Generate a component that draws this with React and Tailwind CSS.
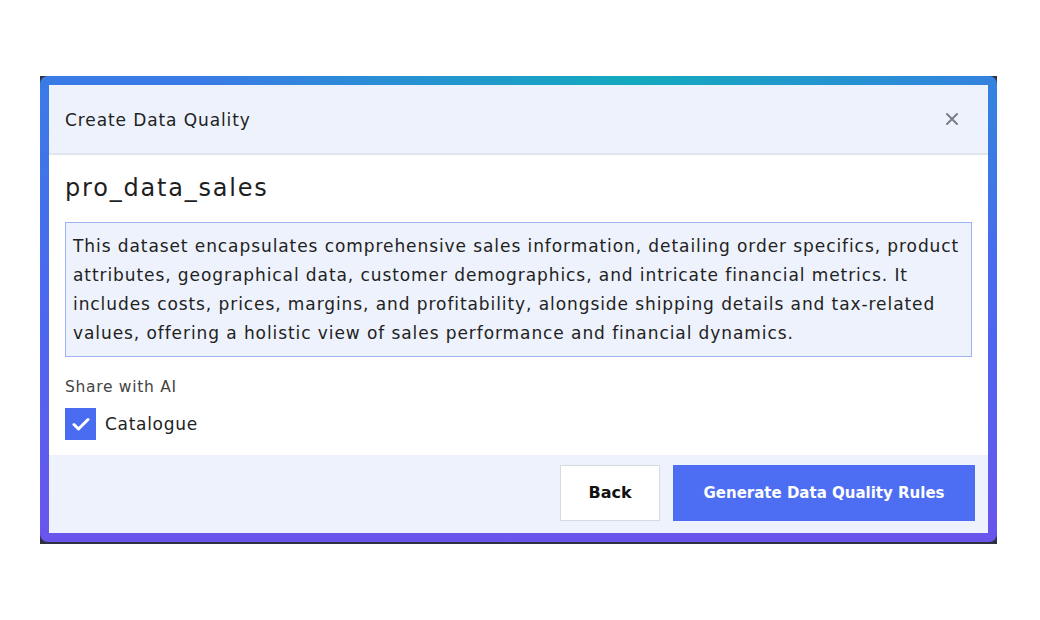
import React, { useState } from "react";

const font = { fontFamily: '"DejaVu Sans", "Open Sans", sans-serif' };

export default function App() {
  const [shared, setShared] = useState(true);

  return (
    <div className="w-[1040px] h-[620px] bg-white pt-[76px] pl-[40px]" style={font}>
      <div className="w-[957px] h-[468px] bg-[#2f3040] pb-[2px]">
        <div className="h-full rounded-[8px] p-[9px] bg-[radial-gradient(ellipse_45%_60%_at_62%_0%,#12aabd_0%,rgba(18,170,189,0)_100%),linear-gradient(180deg,#3a7be6_0%,#4d66ef_55%,#6a55ec_100%)]">
          <div className="h-full flex flex-col bg-white">
            {/* header */}
            <div className="h-[70px] flex items-center justify-between pl-[16px] pr-[29px] pt-[3px] bg-[#edf2fc] border-b-2 border-[#e1e5ec]">
              <h2 className="text-[17px] tracking-[0.9px] text-[#222]">Create Data Quality</h2>
              <button className="text-[#7a7d85] -mt-[3px]">
                <svg width="14" height="14" viewBox="0 0 14 14" fill="none" stroke="currentColor" strokeWidth="2" strokeLinecap="round">
                  <path d="M2 2l10 10M12 2L2 12" />
                </svg>
              </button>
            </div>

            {/* body */}
            <div className="flex-1 px-[16px] pt-[16px]">
              <div className="text-[24px] leading-[34px] tracking-[1.8px] text-[#1f1f1f]">pro_data_sales</div>
              <div className="mt-[17px] border border-[#9fb2f0] bg-[#edf2fc] px-[7px] pt-[9px] pb-[5px] text-[17px] leading-[29px] tracking-[0.92px] text-[#222] h-[135px] whitespace-nowrap">
                This dataset encapsulates comprehensive sales information, detailing order specifics, product
                <br />
                attributes, geographical data, customer demographics, and intricate financial metrics. It
                <br />
                includes costs, prices, margins, and profitability, alongside shipping details and tax-related
                <br />
                values, offering a holistic view of sales performance and financial dynamics.
              </div>
              <div className="mt-[19px] text-[15.5px] tracking-[0.7px] text-[#444]">Share with AI</div>
              <label className="mt-[9px] flex items-center gap-[9px] cursor-pointer">
                <span
                  onClick={() => setShared(!shared)}
                  className={`w-[31px] h-[32px] flex items-center justify-center ${
                    shared ? "bg-[#4a6cf0]" : "bg-white border border-[#9fb2f0]"
                  }`}
                >
                  {shared && (
                    <svg width="18" height="14" viewBox="0 0 18 14" fill="none" stroke="white" strokeWidth="3" strokeLinecap="round" strokeLinejoin="round">
                      <path d="M2 7.5l4.5 4.5L16 2.5" />
                    </svg>
                  )}
                </span>
                <span className="text-[17px] tracking-[0.7px] text-[#222]">Catalogue</span>
              </label>
            </div>

            {/* footer */}
            <div className="h-[78px] bg-[#edf2fc] flex items-start justify-end gap-[13px] pt-[10px] pr-[13px]">
              <button className="w-[100px] h-[56px] bg-white border border-[#d6dbe3] text-[16px] font-bold text-[#111]">
                Back
              </button>
              <button className="w-[302px] h-[56px] bg-[#4d6ef2] text-[15px] font-bold text-white">
                Generate Data Quality Rules
              </button>
            </div>
          </div>
        </div>
      </div>
    </div>
  );
}
